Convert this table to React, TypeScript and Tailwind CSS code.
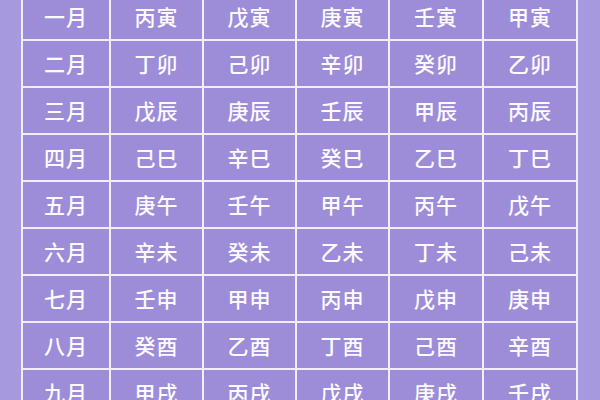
import React from 'react';

const rows: string[][] = [
  ['一月', '丙寅', '戊寅', '庚寅', '壬寅', '甲寅'],
  ['二月', '丁卯', '己卯', '辛卯', '癸卯', '乙卯'],
  ['三月', '戊辰', '庚辰', '壬辰', '甲辰', '丙辰'],
  ['四月', '己巳', '辛巳', '癸巳', '乙巳', '丁巳'],
  ['五月', '庚午', '壬午', '甲午', '丙午', '戊午'],
  ['六月', '辛未', '癸未', '乙未', '丁未', '己未'],
  ['七月', '壬申', '甲申', '丙申', '戊申', '庚申'],
  ['八月', '癸酉', '乙酉', '丁酉', '己酉', '辛酉'],
  ['九月', '甲戌', '丙戌', '戊戌', '庚戌', '壬戌'],
];

const App: React.FC = () => {
  return (
    <div
      className="w-[600px] h-[400px] overflow-hidden bg-[#a699de] pl-[21px]"
      style={{ fontFamily: '"Noto Sans CJK SC", "Noto Sans", sans-serif' }}
    >
      <div className="mt-[-8px] w-[557px] grid grid-cols-[86px_91px_91px_91px_92px_92px] auto-rows-[45px] gap-[2px] p-[2px] bg-[#f1eef9]">
        {rows.map((row, i) =>
          row.map((cell, j) => (
            <div
              key={`${i}-${j}`}
              className="bg-[#9d8dd8] flex items-center justify-center text-[21px] text-[#fbfaff] font-medium tracking-[1px]"
            >
              {cell}
            </div>
          ))
        )}
      </div>
    </div>
  );
};

export default App;
